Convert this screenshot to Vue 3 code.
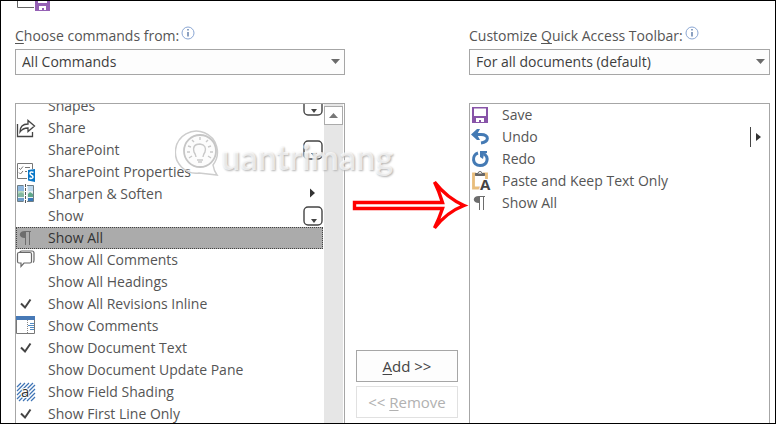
<script setup>
import { ref } from 'vue'

const commands = [
  { label: 'Shapes', drop: true },
  { label: 'Share', icon: 'share' },
  { label: 'SharePoint', drop: true },
  { label: 'SharePoint Properties', icon: 'properties' },
  { label: 'Sharpen & Soften', icon: 'sharpen', sub: true },
  { label: 'Show', drop: true },
  { label: 'Show All', icon: 'pilcrow' },
  { label: 'Show All Comments', icon: 'comments' },
  { label: 'Show All Headings' },
  { label: 'Show All Revisions Inline', icon: 'check' },
  { label: 'Show Comments', icon: 'pane' },
  { label: 'Show Document Text', icon: 'check' },
  { label: 'Show Document Update Pane' },
  { label: 'Show Field Shading', icon: 'shading' },
  { label: 'Show First Line Only', icon: 'check' }
]
const toolbar = [
  { label: 'Save', icon: 'save' },
  { label: 'Undo', icon: 'undo', split: true },
  { label: 'Redo', icon: 'redo' },
  { label: 'Paste and Keep Text Only', icon: 'paste' },
  { label: 'Show All', icon: 'pilcrow' }
]
const selected = ref('Show All')
</script>

<template>
  <main class="dialog">
    <header class="heading">
      <svg width="36" height="12" viewBox="0 0 36 12" aria-hidden="true">
        <path d="M2.500 0V6.500H19" fill="none" stroke="#666" />
        <path d="M20 0H35V10H20Z" fill="#9561b5" />
        <path d="M23 0H32V2H23Z" fill="#fff" />
        <path d="M24 5H31V9H29V7H27V9H24Z" fill="#fff" />
      </svg>
    </header>

    <section class="column">
      <div class="caption">
        <label for="source"><u>C</u>hoose commands from:</label>
        <svg class="info" width="14" height="14" viewBox="0 0 14 14" aria-hidden="true">
          <circle cx="7" cy="7" r="6" fill="#fff" stroke="#8ba7d4" />
          <path d="M7 6V10.500M7 3V4.500" stroke="#4f6f9f" stroke-width="1.300" />
        </svg>
      </div>
      <div class="picker">
        <select id="source"><option>All Commands</option></select>
        <svg width="9" height="5" viewBox="0 0 9 5" aria-hidden="true"><path d="M0 0H9L4.500 5Z" fill="#6b6b6b" /></svg>
      </div>
      <div class="box">
        <ul class="list scrolled" role="listbox" aria-label="Commands">
          <li
            v-for="item in commands" :key="item.label" class="row" role="option"
            :aria-selected="item.label === selected" :class="{ selected: item.label === selected }"
            @click="selected = item.label"
          >
            <svg class="icon" width="20" height="20" viewBox="0 0 20 20" aria-hidden="true">
              <g v-if="item.icon === 'share'" fill="none" stroke="#444" stroke-width="1.300">
                <path d="M1.500 6V18.500H16.500V14" />
                <path d="M4 14C4 8 7 6 12 6V2.500L18.500 8L12 13.500V10C8 10 6 11 4 14Z" />
              </g>
              <g v-else-if="item.icon === 'properties'">
                <path d="M11 16.500H1.500V1.500H16.500V7" fill="none" stroke="#777" />
                <path d="M3 6L4.500 7.500L7 4.500M3 10.500L4.500 12L7 9M9 5.500H14M9 9.500H11" fill="none" stroke="#777" />
                <path d="M12 8L19 7V20L12 18.500Z" fill="#0877c8" />
                <path d="M17.500 10.500C15.500 9.500 14 10 14 11.500C14 13.500 17 13 17 15C17 16.500 15 16.800 13.500 16" fill="none" stroke="#fff" stroke-width="1.500" />
              </g>
              <g v-else-if="item.icon === 'sharpen'">
                <path d="M1 1H18V18H1Z" fill="#e7f1f5" />
                <path d="M2 2H8V7H2Z" fill="#8fb8df" /><path d="M2 7H8V12H2Z" fill="#b6d8c0" /><path d="M2 10Q5 7 8 10V13H2Z" fill="#83b8a0" /><path d="M2 14H8V17H2Z" fill="#6d9dcb" />
                <path d="M12 2H17V7H12Z" fill="#bdd8ed" /><path d="M12 10L14 8L17 10V13H12Z" fill="#5fa78a" /><path d="M12 14H17V17H12Z" fill="#3979ba" />
                <path d="M7.500 1.500H1.500V17.500H7.500M11 1.500H17.500V17.500H11" fill="none" stroke="#6d7d85" />
                <path d="M9.500 0V19" stroke="#fff" stroke-width="3" />
                <path d="M9.500 0V19" stroke="#555" stroke-dasharray="3 1" />
              </g>
              <g v-else-if="item.icon === 'pilcrow'" fill="#6d6d6d">
                <path d="M9 3H15V4H14V17H13V4H10V17H9V10C2 10 2 3 9 3Z" />
              </g>
              <g v-else-if="item.icon === 'comments'" fill="none" stroke="#696969" stroke-width="1.200">
                <path d="M4 2V1.800Q4.500 1 6 1H16Q18 1 18 3V10Q18 12 17 12.500" />
                <path d="M3 2.500H14Q15.500 2.500 15.500 4V11.500Q15.500 13 14 13H8L5 16.500V13H3Q1.500 13 1.500 11.500V4Q1.500 2.500 3 2.500Z" />
              </g>
              <g v-else-if="item.icon === 'check'">
                <path d="M5 9.500L9 13.500L14.500 5.500" fill="none" stroke="#444" stroke-width="2" />
              </g>
              <g v-else-if="item.icon === 'pane'">
                <path d="M0.500 1.500H18.500V17.500H0.500Z" fill="#fff" stroke="#777" />
                <path d="M0 0H19V4H0Z" fill="#4779b6" />
                <path d="M11.500 4V17" stroke="#888" stroke-dasharray="1 1" />
                <path d="M14 7.500H18M12 9.500H18M14 11.500H18M14 13.500H18" stroke="#518ac3" />
              </g>
              <g v-else-if="item.icon === 'shading'">
                <path d="M1 5L5 1M1 9L9 1M1 13L13 1M1 17L17 1M3 19L19 3M7 19L19 7M11 19L19 11M15 19L19 15" stroke="#3e74b5" stroke-width="1.200" />
                <text x="5" y="15" class="letter" stroke="#fff" stroke-width="2" paint-order="stroke" fill="#333">a</text>
              </g>
            </svg>
            <span class="name">{{ item.label }}</span>
            <svg v-if="item.drop" class="drop" width="20" height="20" viewBox="0 0 20 20" aria-hidden="true">
              <rect x="1" y="1" width="18" height="18" rx="4" fill="#fff" stroke="#444" stroke-width="1.400" />
              <path d="M8 13H14L11 17Z" fill="#444" />
            </svg>
            <svg v-if="item.sub" class="drop" width="20" height="20" viewBox="0 0 20 20" aria-hidden="true">
              <path d="M7 4.500L12 9L7 13.500Z" fill="#333" />
            </svg>
          </li>
        </ul>
        <div class="scrollbar">
          <button class="up" type="button" aria-label="Scroll up">
            <svg width="9" height="5" viewBox="0 0 9 5"><path d="M0 5H9L4.500 0Z" fill="#777" /></svg>
          </button>
        </div>
      </div>
    </section>

    <div class="actions">
      <button type="button"><span><u>A</u>dd &gt;&gt;</span></button>
      <button type="button" disabled><span>&lt;&lt; <u>R</u>emove</span></button>
    </div>

    <section class="column">
      <div class="caption">
        <label for="target">Customize <u>Q</u>uick Access Toolbar:</label>
        <svg class="info" width="14" height="14" viewBox="0 0 14 14" aria-hidden="true">
          <circle cx="7" cy="7" r="6" fill="#fff" stroke="#8ba7d4" />
          <path d="M7 6V10.500M7 3V4.500" stroke="#4f6f9f" stroke-width="1.300" />
        </svg>
      </div>
      <div class="picker">
        <select id="target"><option>For all documents (default)</option></select>
        <svg width="9" height="5" viewBox="0 0 9 5" aria-hidden="true"><path d="M0 0H9L4.500 5Z" fill="#6b6b6b" /></svg>
      </div>
      <div class="box">
        <ul class="list current" role="listbox" aria-label="Toolbar commands">
          <li v-for="item in toolbar" :key="item.label" class="row" role="option" aria-selected="false">
            <svg class="icon" width="20" height="20" viewBox="0 0 20 20" aria-hidden="true">
              <g v-if="item.icon === 'save'">
                <path d="M1 2H17V18H1Z" fill="#8854a8" />
                <path d="M3 3.500H15V11H3Z" fill="#fff" /><path d="M5 13H13V17H10V15H8V17H5Z" fill="#fff" />
              </g>
              <g v-else-if="item.icon === 'undo'">
                <path d="M4 7.500H10C19 7.500 18 15 10 16" fill="none" stroke="#447ab4" stroke-width="3" />
                <path d="M0 7.500L6 2H9L6 7.500L9 13H6Z" fill="#447ab4" />
              </g>
              <g v-else-if="item.icon === 'redo'">
                <path d="M7 4C0.500 6 1 16.500 9 16.500C17 16.500 18 8 13 5" fill="none" stroke="#447ab4" stroke-width="3" />
                <path d="M9 2H16V4L13 5L12 10L9 8Z" fill="#447ab4" />
              </g>
              <g v-else-if="item.icon === 'paste'">
                <path d="M9 17H2.500V3H5M12 3H15.500V8" fill="none" stroke="#e8bd7c" stroke-width="2.800" />
                <path d="M4.500 4.500V2.500H7Q7 0.500 9 0.500Q11 0.500 11 2.500H13.500V4.500Z" fill="#fff" stroke="#666" />
                <path d="M4 2.500H14V4.500H4Z" fill="#666" />
                <text x="9" y="19" class="letter bold" stroke="#fff" stroke-width="2" paint-order="stroke" fill="#444">A</text>
              </g>
              <g v-else fill="#6d6d6d">
                <path d="M8 3H14V4H13V17H12V4H9V17H8V10C1 10 1 3 8 3Z" />
              </g>
            </svg>
            <span class="name">{{ item.label }}</span>
            <svg v-if="item.split" class="split" width="14" height="20" viewBox="0 0 14 20" aria-hidden="true">
              <path d="M1.500 0V20" stroke="#444" /><path d="M7 6L12 10L7 14Z" fill="#333" />
            </svg>
          </li>
        </ul>
      </div>
    </section>

    <svg class="pointer" width="118" height="60" viewBox="0 0 118 60" aria-hidden="true">
      <path d="M3.500 25.500H91.500Q88 14 83.500 5Q96 21 113 28.500Q96 35 83.500 51Q88 42 91.500 31.500H3.500Z" fill="#fff" stroke="#f00" stroke-width="3.400" stroke-miterlimit="8" />
    </svg>

    <div class="watermark">
      <svg width="46" height="50" viewBox="0 0 46 50" aria-hidden="true">
        <path d="M38 37A21 21 0 1 0 24 45L42 47Q39 43 38 37Z" fill="#fff" fill-opacity=".3" stroke="#cdcdcd" stroke-width="1.500" />
        <circle cx="25" cy="23" r="16" fill="#fafafa" fill-opacity=".5" stroke="#c6c6c6" stroke-width="1.800" />
        <path d="M21 29Q21 27 19 24Q17 16 25 16Q32 17 30 24Q28 27 28 29M22 32H28M23 34H27M25 9V12M17 12L19 14M33 12L31 14M13 18L16 19M36 18L33 19M12 24H15M35 24H38M14 30L17 28M36 30L33 28" fill="none" stroke="#c9c9c9" stroke-width="1.400" />
      </svg>
      <span>uantrimang</span>
    </div>
  </main>
</template>

<style>
body { margin: 0; background: #fff; }
</style>

<style scoped>
* { box-sizing: border-box; }
.dialog {
  position: relative;
  display: grid;
  grid-template-columns: minmax(0, 330fr) 124px minmax(0, 301fr);
  grid-template-rows: 24px minmax(0, 1fr);
  height: 100vh;
  padding: 0 5px 0 14px;
  border: 1px solid #000;
  overflow: hidden;
  background: #fff;
  color: #555;
  font: 14px/22px "Open Sans", "Noto Sans", sans-serif;
}
.heading { grid-column: 1 / -1; }
.heading svg { display: block; }
.column { display: flex; flex-direction: column; min-width: 0; min-height: 0; }
.caption { display: flex; gap: 2px; height: 24px; white-space: nowrap; }
.info { margin-top: 1px; }
u { text-underline-offset: 2px; text-decoration-thickness: 1px; }
.picker { position: relative; margin-bottom: 28px; }
.picker select {
  display: block;
  width: 100%;
  height: 26px;
  padding: 0 24px 0 6px;
  border: 1px solid #a6a6a6;
  border-radius: 0;
  appearance: none;
  background: #fdfdfd;
  color: #3d3d3d;
  font: inherit;
}
.picker svg { position: absolute; right: 5px; top: 10px; pointer-events: none; }
.box {
  display: flex;
  flex: 1;
  min-height: 0;
  border: 1px solid #a6a6a6;
  border-bottom: 0;
  overflow: hidden;
}
.list { flex: 1; min-width: 0; margin: 0; padding: 0; list-style: none; }
.scrolled { margin-top: -9px; }
.current { padding: 0 6px 0 1px; }
.row { display: flex; align-items: center; height: 22px; white-space: nowrap; }
.icon { flex: none; margin-right: 12px; }
.current .icon { margin-right: 11px; }
.name { flex: 1; }
.selected { background: #ababab; color: #333; outline: 1px dotted #444; outline-offset: -1px; }
.letter { font: 15px "Open Sans", sans-serif; }
.bold { font-weight: 700; }
.scrollbar { width: 20px; margin-left: 1px; padding: 2px 1px 0 0; background: linear-gradient(to right, #e6e6e6 19px, #fff 19px); }
.up {
  display: grid;
  place-items: center;
  width: 19px;
  height: 19px;
  padding: 0;
  border: 1px solid #ababab;
  background: #fff;
}
.actions { display: flex; flex-direction: column; justify-content: flex-end; gap: 4px; padding: 0 11px 5px; }
.actions button {
  height: 32px;
  padding: 0;
  border: 1px solid #a6a6a6;
  background: #fdfdfd;
  color: #444;
  font-family: inherit;
  font-size: 15px;
}
.actions button:disabled { border-color: #e1e1e1; background: #fff; color: #b1b1b1; }
.pointer { position: absolute; left: 350px; top: 176px; pointer-events: none; }
.watermark {
  position: absolute;
  left: 174px;
  top: 127px;
  display: flex;
  pointer-events: none;
  color: rgba(255, 255, 255, 0.7);
  font: 700 34px/58px Lato, sans-serif;
  text-shadow: 1px 1px 2px #b4b4b4;
}
</style>
